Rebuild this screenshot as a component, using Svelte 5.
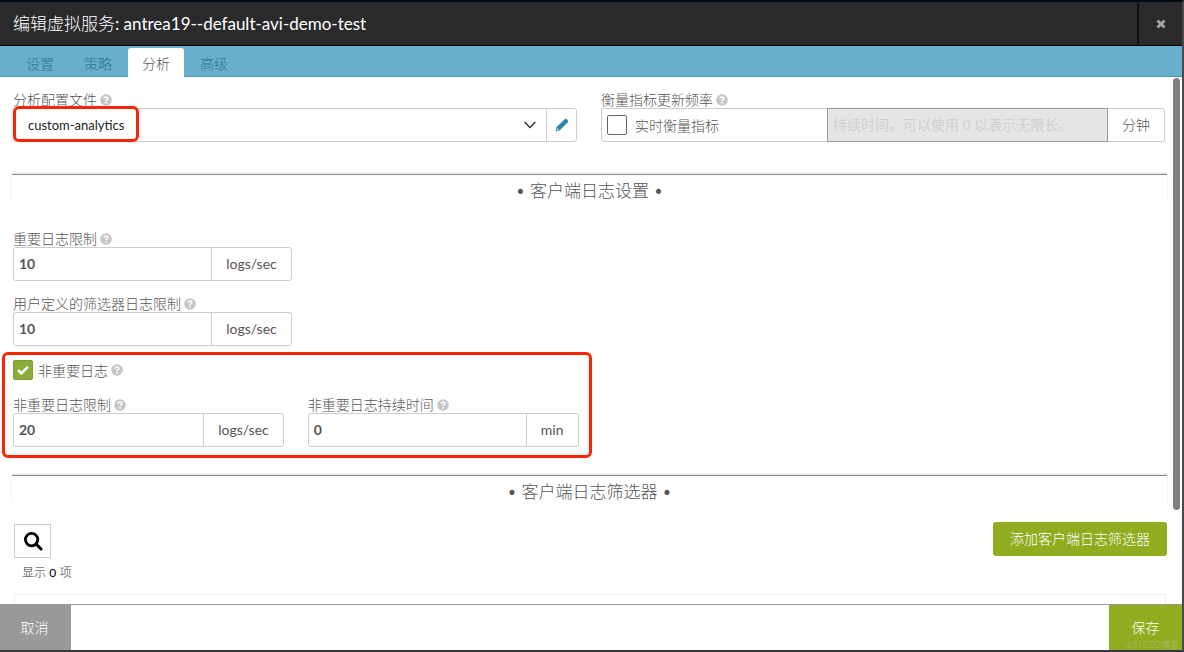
<script>
  const tabs = ['设置', '策略', '分析', '高级'];
  let active = $state('分析');
  let realtime = $state(false);
  let nonSignificant = $state(true);
</script>

{#snippet help()}
  <svg class="help" viewBox="0 0 12 12" aria-hidden="true">
    <circle cx="6" cy="6" r="5.8" fill="#c6c6c6" />
    <path d="M4.2 4.7C4.2 2.4 7.9 2.5 7.8 4.6C7.8 5.8 6 5.8 6 7.1" fill="none" stroke="#fff" stroke-width="1.5" />
    <rect x="5.2" y="8" width="1.6" height="1.6" fill="#fff" />
  </svg>
{/snippet}

{#snippet limit(id, label, value, unit)}
  <div class="field">
    <label for={id}>{label}{@render help()}</label>
    <div class="group">
      <input class="value" {id} type="text" {value} />
      <span class="unit">{unit}</span>
    </div>
  </div>
{/snippet}

<div class="modal">
  <header>
    <h1><span>编辑虚拟服务</span>: antrea19--default-avi-demo-test</h1>
    <button class="close" aria-label="关闭">
      <svg width="10" height="10" viewBox="0 0 10 10"><path d="M1.5 1.5L8.5 8.5M8.5 1.5L1.5 8.5" stroke="#a5a5a8" stroke-width="2.8" /></svg>
    </button>
  </header>

  <nav>
    {#each tabs as tab}
      <button class="tab" class:active={tab === active} onclick={() => (active = tab)}>{tab}</button>
    {/each}
  </nav>

  <main>
    <div class="columns">
      <div class="field">
        <label for="profile">分析配置文件{@render help()}</label>
        <div class="group">
          <div class="picker">
            <select id="profile"><option>custom-analytics</option></select>
            <svg width="12" height="8" viewBox="0 0 12 8" aria-hidden="true"><path d="M.7 1L6 6.6L11.3 1" fill="none" stroke="#222" stroke-width="1.3" /></svg>
          </div>
          <button class="edit" aria-label="编辑">
            <svg width="14" height="14" viewBox="0 0 14 14">
              <path d="M.6 13.4L1.4 9.2L9.6 1.2Q10.6.2 11.6 1.1L13 2.4Q13.8 3.3 12.9 4.2L4.6 12.5Z" fill="#2f86ab" />
              <path d="M2.1 10.2L3.8 11.8L1.7 12.4Z" fill="#fff" />
            </svg>
          </button>
        </div>
        <div class="mark mark-profile"></div>
      </div>

      <div class="field">
        <label for="duration">衡量指标更新频率{@render help()}</label>
        <div class="group">
          <label class="check realtime">
            <input type="checkbox" bind:checked={realtime} />
            <span>实时衡量指标</span>
          </label>
          <input class="duration" id="duration" type="text" placeholder="持续时间。可以使用 0 以表示无限长。" disabled={!realtime} />
          <span class="unit">分钟</span>
        </div>
      </div>
    </div>

    <h2 class="first">• 客户端日志设置 •</h2>

    <section class="logs">
      <div class="narrow">{@render limit('significant', '重要日志限制', '10', 'logs/sec')}</div>
      <div class="narrow">{@render limit('udf', '用户定义的筛选器日志限制', '10', 'logs/sec')}</div>
      <div class="nonsig">
        <label class="check">
          <input class="green" type="checkbox" bind:checked={nonSignificant} />
          {#if nonSignificant}
            <svg class="tick" width="14" height="12" viewBox="0 0 14 12" aria-hidden="true"><path d="M2 6L5.3 9.3L12 2.6" fill="none" stroke="#fff" stroke-width="2.6" /></svg>
          {/if}
          <span>非重要日志</span>{@render help()}
        </label>
        <div class="pair">
          {@render limit('nonsig', '非重要日志限制', '20', 'logs/sec')}
          {@render limit('nonsig-time', '非重要日志持续时间', '0', 'min')}
        </div>
        <div class="mark mark-nonsig"></div>
      </div>
    </section>

    <h2>• 客户端日志筛选器 •</h2>

    <div class="toolbar">
      <div>
        <button class="search" aria-label="搜索">
          <svg width="20" height="20" viewBox="0 0 20 20"><circle cx="8.6" cy="8.6" r="6.2" fill="none" stroke="#000" stroke-width="2.8" /><path d="M13 13L18 18" stroke="#000" stroke-width="3" stroke-linecap="round" /></svg>
        </button>
        <p>显示 <b>0</b> 项</p>
      </div>
      <button class="add">添加客户端日志筛选器</button>
    </div>
    <div class="table-top"></div>
    <div class="thumb"></div>
  </main>

  <footer>
    <button class="cancel">取消</button>
    <button class="save">保存</button>
    <span class="credit">@51CTO博客</span>
  </footer>
</div>

<style>
  :global(body) { margin: 0; background: #fff; }
  .modal, .modal * { box-sizing: border-box; }
  .modal {
    display: flex;
    flex-direction: column;
    height: 100vh;
    border-top: 2px solid #020b12;
    border-right: 2px solid #4a4a4c;
    border-bottom: 2px solid #38383a;
    font-family: Lato, "Noto Sans CJK SC", sans-serif;
    font-size: 14px;
    font-weight: 300;
    color: #555;
  }
  button, input, select { font: inherit; color: inherit; margin: 0; padding: 0; border: 0; background: none; border-radius: 0; }
  button { cursor: pointer; }
  svg { flex: none; display: block; }

  header { display: flex; flex: none; height: 44px; background: #2a2a2c; border-bottom: 1px solid #050505; }
  h1 { flex: 1; margin: 0; padding-left: 13px; font-size: 17px; font-weight: 400; line-height: 44px; color: #fff; }
  h1 span { font-weight: 300; }
  .close { display: grid; place-items: center; width: 45px; border-left: 2px solid #121113; }

  nav { display: flex; flex: none; gap: 2px; height: 31px; padding: 2px 0 0 12px; background: #67afca; border-bottom: 1px solid #4a94b3; }
  .tab { padding: 2px 14px 0; line-height: 26px; height: 29px; color: #2f7896; border-radius: 3px 3px 0 0; }
  .tab.active { background: #fff; color: #555; }

  main { position: relative; flex: 1; min-height: 0; overflow: hidden; padding: 14px 15px 0 12px; }
  .columns { display: grid; grid-template-columns: 1fr 1fr; gap: 24px; padding: 0 2px 0 1px; }
  .field { position: relative; min-width: 0; }
  label { display: flex; align-items: center; height: 17px; line-height: 17px; white-space: nowrap; color: #555; }
  .help { width: 12px; height: 12px; margin-left: 3px; }
  .group { display: flex; height: 34px; border: 1px solid #ccc; border-radius: 3px; }
  .picker { display: flex; align-items: center; flex: 1; min-width: 0; padding-right: 10px; }
  select { appearance: none; flex: 1; min-width: 0; height: 32px; padding-left: 14px; font-size: 13px; font-weight: 400; color: #222; outline: 0; }
  .edit { display: grid; place-items: center; width: 30px; border-left: 1px solid #ccc; }
  .value { flex: 1; min-width: 0; padding: 0 0 2px 5px; font-weight: 700; }
  .unit { display: flex; align-items: center; padding: 0 14px 2px; border-left: 1px solid #ccc; font-weight: 400; }

  .check { position: relative; height: 20px; }
  .check input { appearance: none; width: 20px; height: 20px; margin-right: 5px; border: 1px solid #666; border-radius: 2px; }
  .check .green:checked { background: #8bab3a; border-color: #7d9c2f; }
  .tick { position: absolute; left: 3px; top: 4px; pointer-events: none; }
  .realtime { flex: 1; height: 32px; padding-left: 5px; }
  .realtime input { margin-right: 8px; }
  .duration { width: 50%; height: 34px; margin-top: -1px; padding: 0 0 2px 5px; background: #e5e5e5; border: 1px solid #999; font-weight: 400; }
  .duration::placeholder { color: #d0d0d0; opacity: 1; }
  .duration + .unit { border-left: 0; font-weight: 300; }

  h2 {
    height: 28px;
    margin: 28px 0 0;
    border-top: 1px solid #888;
    box-shadow: 0 -1px 2px #ddd;
    background: #fff;
    font-size: 17px;
    font-weight: 300;
    line-height: 32px;
    text-align: center;
    color: #555;
  }
  h2.first { margin-top: 32px; }

  .logs { display: flex; flex-direction: column; gap: 14px; width: calc(50% - 11px); margin-top: 28px; padding-left: 1px; }
  .narrow { width: calc(50% - 4px); }
  .nonsig { position: relative; }
  .pair { display: grid; grid-template-columns: 1fr 1fr; gap: 24px; margin-top: 16px; }
  .mark { position: absolute; border: 3px solid #fb2405; border-radius: 6px; pointer-events: none; }
  .mark-profile { left: 0; top: 15px; width: 126px; height: 36px; }
  .mark-nonsig { inset: -8px -13px -11px -11px; }

  .toolbar { display: flex; justify-content: space-between; align-items: flex-start; margin-top: 19px; }
  .search { display: grid; place-items: center; width: 37px; height: 34px; margin: 2px 0 0 2px; border: 1px solid #ccc; }
  p { margin: 6px 0 0 10px; font-size: 12px; line-height: 18px; color: #333; }
  b { font-weight: 400; color: #000; }
  .add { height: 34px; padding: 0 17px 2px; border-radius: 3px; background: #8fad1f; color: #fff; }
  .table-top { height: 40px; margin: 12px 1px 0 2px; border: 1px solid #eee; }
  .thumb { position: absolute; right: 2px; top: 1px; width: 7px; height: 82%; border-radius: 4px; background: #808080; }

  footer { position: relative; display: flex; flex: none; justify-content: space-between; height: 46px; border-top: 1px solid #999; background: #fff; }
  footer button { padding-bottom: 2px; color: #fff; }
  .cancel { width: 71px; padding-right: 2px; background: #999; }
  .save { width: 73px; background: #8fad1f; }
  .credit { position: absolute; right: 3px; bottom: 0; font-size: 9px; line-height: 11px; color: #b0b877; }
</style>
